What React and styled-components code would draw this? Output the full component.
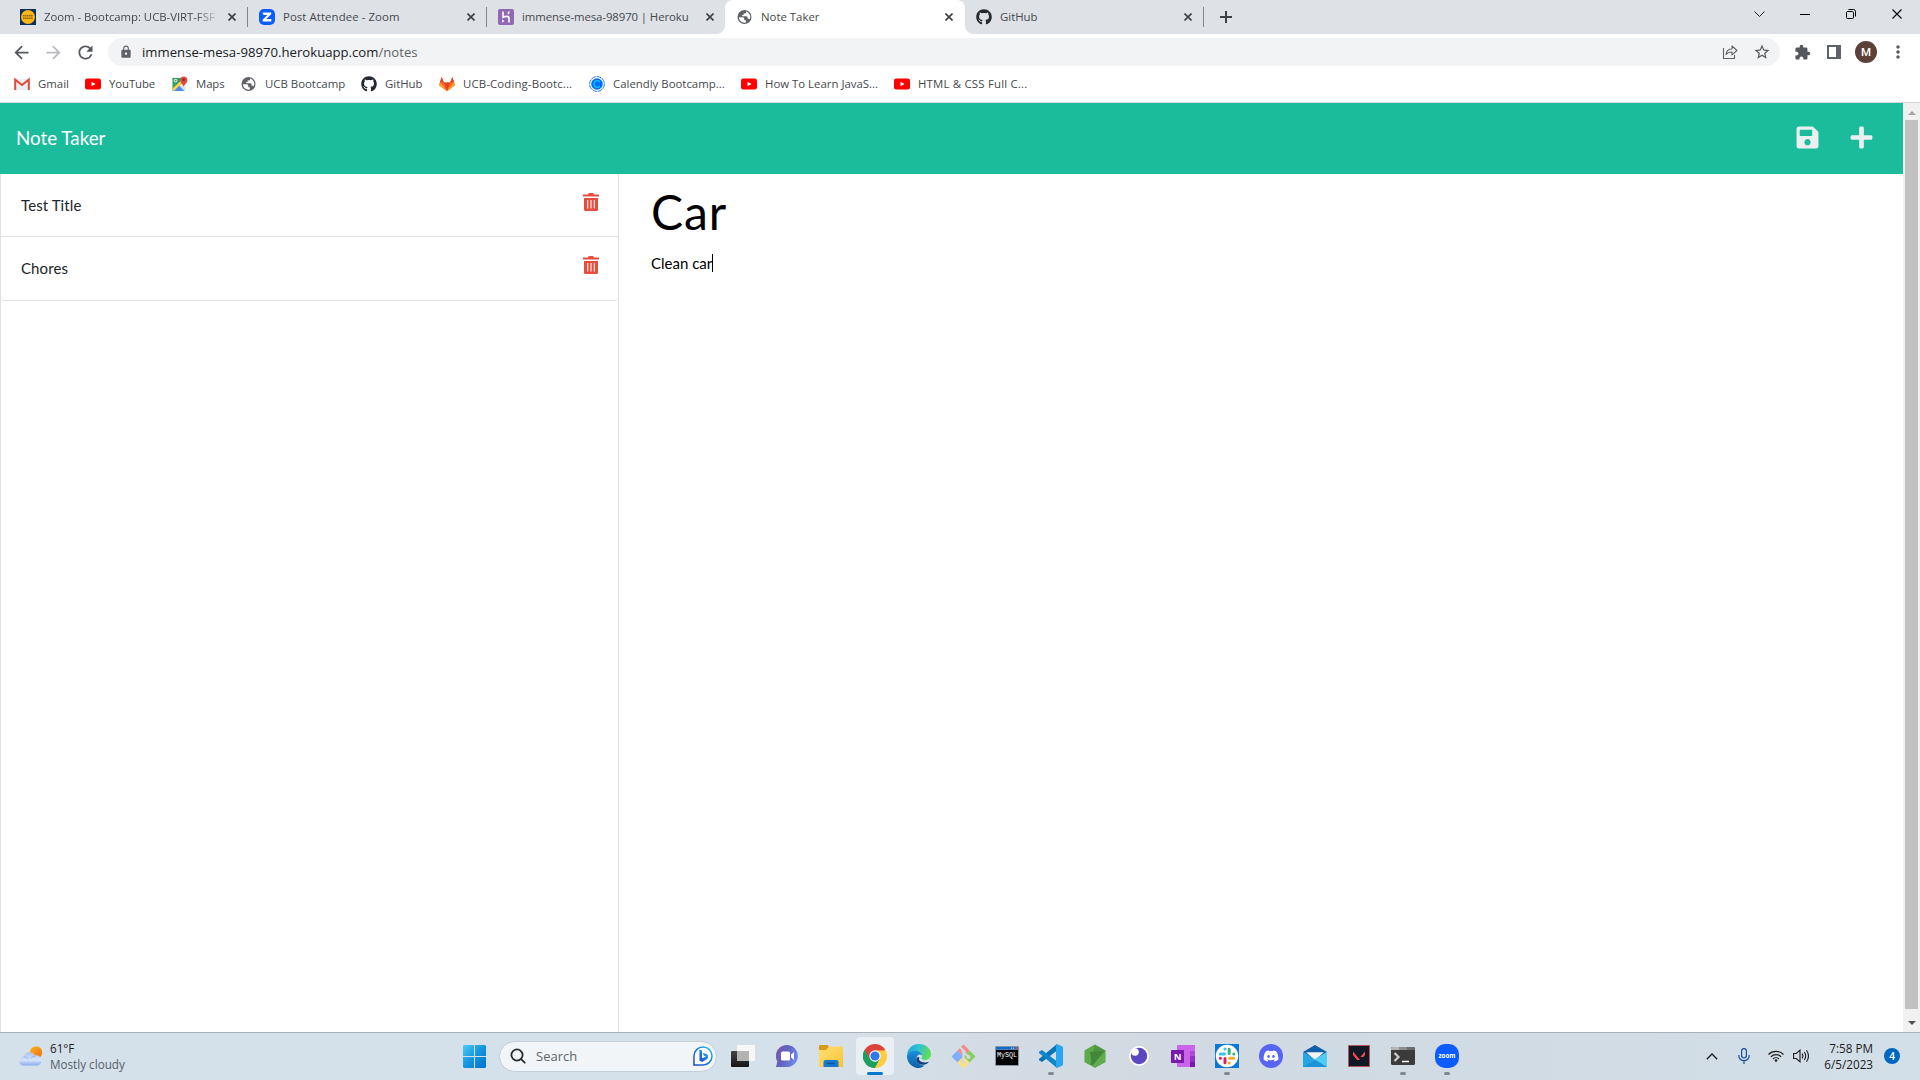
import React from 'react';
import styled, { createGlobalStyle, css } from 'styled-components';
import {
  MdArrowBack, MdArrowForward, MdRefresh, MdLock,
  MdStarBorder, MdExtension, MdMoreVert,
} from 'react-icons/md';
import { FaGithub, FaDiscord, FaSave, FaPlus } from 'react-icons/fa';

const GlobalStyle = createGlobalStyle`
  *, *::before, *::after { box-sizing: border-box; }
  body { margin: 0; overflow: hidden; font-family: "Open Sans", "Noto Sans", sans-serif; }
  svg { display: block; flex: none; }
`;

const Screen = styled.div`
  display: flex;
  flex-direction: column;
  width: 1920px;
  height: 1080px;
  background: #fff;
`;

/* ---------- browser chrome ---------- */

const TabStrip = styled.div`
  display: flex;
  height: 34px;
  padding-left: 8px;
  background: #dee1e6;
`;

const TabBox = styled.div`
  position: relative;
  display: flex;
  align-items: center;
  width: 239px;
  height: 34px;
  padding: 0 7px 0 12px;
  gap: 8px;
  color: #45494d;
  ${(p) => p.$active && css`
    background: #fff;
    border-radius: 8px 8px 0 0;
    width: 240px;
    margin-right: -1px;
    padding-right: 8px;
    &::before, &::after {
      content: "";
      position: absolute;
      bottom: 0;
      width: 8px;
      height: 8px;
    }
    &::before { left: -8px; background: radial-gradient(circle at 0 0, transparent 7.5px, #fff 8px); }
    &::after { right: -8px; background: radial-gradient(circle at 100% 0, transparent 7.5px, #fff 8px); }
  `}
  ${(p) => p.$divider && css`
    &::after {
      content: "";
      position: absolute;
      right: -1px;
      top: 7px;
      width: 1px;
      height: 20px;
      background: #80868b;
    }
  `}
`;

const TabTitle = styled.span`
  flex: 1;
  overflow: hidden;
  margin-right: -4px;
  white-space: nowrap;
  font-size: 11.4px;
  line-height: 18px;
  letter-spacing: ${(p) => p.$track || 0}px;
  ${(p) => p.$fade && 'mask-image: linear-gradient(90deg, #000 86%, transparent 100%);'}
`;

const TabClose = styled.span`
  display: flex;
  width: 16px;
  justify-content: center;
`;

const NewTab = styled.div`
  display: flex;
  align-items: center;
  padding-left: 17px;
  flex: 1;
`;

const WindowControls = styled.div`
  display: flex;
  height: 28px;
`;

const ControlCell = styled.div`
  display: flex;
  align-items: center;
  justify-content: center;
  width: 46px;
`;

const Toolbar = styled.div`
  display: flex;
  align-items: center;
  height: 36px;
  padding-left: 5px;
  color: #5f6368;
`;

const NavButton = styled.div`
  display: flex;
  align-items: center;
  justify-content: center;
  width: ${(p) => p.$w || 32}px;
  height: 28px;
  color: ${(p) => (p.$dim ? '#b9bbbe' : '#54585d')};
`;

const AddressBar = styled.div`
  display: flex;
  align-items: center;
  width: 1672px;
  height: 28px;
  margin-left: 7px;
  padding: 0 2px 0 11px;
  border-radius: 14px;
  background: #f1f3f4;
`;

const Url = styled.span`
  flex: 1;
  margin-left: 9px;
  font-size: 13.17px;
  line-height: 20px;
  color: #5f6368;
  b { font-weight: 400; color: #202124; }
`;

const Avatar = styled.div`
  width: 22px;
  height: 22px;
  border-radius: 50%;
  background: #5d4037;
  color: #fff;
  font: 500 11.5px/22px Roboto, sans-serif;
  text-align: center;
`;

const Bookmarks = styled.div`
  display: flex;
  align-items: center;
  height: 33px;
  padding: 0 0 4px 14px;
  border-bottom: 1px solid #d5d8dc;
`;

const Bookmark = styled.div`
  display: flex;
  align-items: center;
  gap: 8px;
  width: ${(p) => p.$w}px;
  font-size: 11.4px;
  line-height: 18px;
  letter-spacing: ${(p) => p.$track || 0}px;
  white-space: nowrap;
  color: #45494d;
`;

const IconBox = styled.span`
  display: flex;
  align-items: center;
  justify-content: center;
  flex: none;
  width: 16px;
  height: 16px;
`;

/* ---------- note taker page ---------- */

const Viewport = styled.div`
  display: flex;
  height: 929px;
`;

const Page = styled.div`
  display: flex;
  flex-direction: column;
  width: 1903px;
  font-family: Lato, sans-serif;
`;

const Navbar = styled.header`
  display: flex;
  align-items: center;
  justify-content: space-between;
  height: 71px;
  padding: 0 29px 2px 16px;
  background: #1abc9c;
  color: #fff;
  font-size: 18.8px;
`;

const NavActions = styled.div`
  display: flex;
  gap: 29px;
  padding-bottom: 1px;
  color: #eceff1;
`;

const Columns = styled.main`
  display: flex;
  flex: 1;
`;

const NoteList = styled.ul`
  width: 619px;
  margin: 0;
  padding: 0;
  list-style: none;
  border: solid #dfdfdf;
  border-width: 0 1px;
`;

const NoteItem = styled.li`
  display: flex;
  justify-content: space-between;
  height: ${(p) => (p.$last ? 64 : 63)}px;
  padding: 19px 19px 0 20px;
  border-bottom: 1px solid #dfdfdf;
  border-radius: ${(p) => (p.$last ? '0 0 4px 4px' : 0)};
  font-size: 15px;
  line-height: 24px;
  letter-spacing: 0.1px;
  color: #212529;
`;

const Editor = styled.section`
  display: flex;
  flex-direction: column;
  padding: 2px 0 0 32px;
  color: #000;
`;

const NoteTitle = styled.div`
  font-size: 48px;
  line-height: 72px;
  letter-spacing: 0.9px;
`;

const NoteBody = styled.div`
  display: flex;
  align-items: center;
  margin-top: 3px;
  font-size: 15px;
  line-height: 24px;
`;

const Caret = styled.i`
  width: 1px;
  height: 18px;
  background: #000;
`;

const Scrollbar = styled.div`
  display: flex;
  flex-direction: column;
  align-items: center;
  width: 17px;
  background: #f1f1f1;
`;

const ScrollArrow = styled.div`
  display: flex;
  align-items: center;
  height: ${(p) => p.$h}px;
  padding-top: ${(p) => p.$top}px;
`;

const Thumb = styled.div`
  flex: 1;
  width: 13px;
  background: #c1c1c1;
`;

/* ---------- taskbar ---------- */

const Taskbar = styled.footer`
  display: flex;
  align-items: center;
  height: 48px;
  padding-bottom: 1px;
  border-top: 1px solid #a8b1b9;
  background: linear-gradient(90deg, #d5e1ea 0%, #d5e1ea 40%, #d2dae2 57%, #d0dbe4 75%, #d3dfe8 100%);
`;

const Weather = styled.div`
  display: flex;
  align-items: center;
  gap: 7px;
  width: 452px;
  padding: 0 0 1px 19px;
  font-size: 11.7px;
  line-height: 16px;
  color: #55606a;
  b { display: block; font-weight: 400; color: #1b1b1b; }
`;

const TaskCell = styled.div`
  position: relative;
  display: flex;
  align-items: center;
  justify-content: center;
  width: 44px;
  height: 40px;
  &::before {
    content: "";
    position: absolute;
    inset: 1px 3px;
    border-radius: 4px;
    background: ${(p) => (p.$active ? '#e9eff4' : 'transparent')};
  }
  &::after {
    content: "";
    position: absolute;
    bottom: 1px;
    width: ${(p) => (p.$active ? 16 : 6)}px;
    height: 3px;
    border-radius: 2px;
    background: ${(p) => (p.$active ? '#0a74cf' : p.$running ? '#82888e' : 'transparent')};
  }
  svg { position: relative; }
`;

const SearchBox = styled.div`
  display: flex;
  align-items: center;
  width: 218px;
  height: 31px;
  margin: 0 4px 0 3px;
  padding: 0 4px 0 10px;
  border: 1px solid #c3ced7;
  border-radius: 16px;
  background: #f1f5f8;
  color: #606467;
  font-size: 13px;
  line-height: 18px;
  span { flex: 1; margin-left: 10px; }
  svg:last-child { margin-right: -1px; }
`;

const Tray = styled.div`
  display: flex;
  align-items: center;
  margin-left: auto;
  padding-right: 20px;
`;

const TrayCell = styled.div`
  display: flex;
  justify-content: center;
  width: ${(p) => p.$w}px;
`;

const Clock = styled.div`
  width: 63px;
  margin-right: 11px;
  padding-bottom: 1px;
  text-align: right;
  white-space: nowrap;
  font-size: 11.7px;
  line-height: 16px;
  color: #1b1b1b;
`;

const Badge = styled.div`
  width: 16px;
  height: 16px;
  border-radius: 50%;
  background: #0067c0;
  color: #fff;
  font-size: 10px;
  font-weight: 600;
  line-height: 16px;
  text-align: center;
`;

/* ---------- drawings ---------- */

const Cross = ({ s = 8, w = 1.6, c = '#3c4043' }) => (
  <svg width={s} height={s} viewBox={`0 0 ${s} ${s}`}>
    <path d={`M.5 .5L${s - 0.5} ${s - 0.5}M${s - 0.5} .5L.5 ${s - 0.5}`} stroke={c} strokeWidth={w} />
  </svg>
);

const Globe = () => (
  <svg width="16" height="16" viewBox="0 0 16 16">
    <circle cx="7.500" cy="8" r="7" fill="#5f6368" />
    <path d="M2 8.300h3.700q1.600.2 1.600 1.700v1.200h1.600v2.300Q5 14.200 3 11.500 2 10 2 8.300zM9 2.300v1.200q0 1-1.200 1H6.600v1.600H5.200v1.200h4.400q1 .2 1 1.300v1.200h1.300q.6.100.8.600 1.200-2 .4-4.200-1.200-3-4.100-3.900z" fill="#fff" />
  </svg>
);

const UcbIcon = () => (
  <svg width="16" height="16" viewBox="0 0 16 16">
    <path fill="#0b2f5b" d="M0 0h16v16H0z" />
    <circle cx="8" cy="8" r="7" fill="#fdb515" />
    <path d="M3 6.700h10M3 9.300h10" stroke="#8a6a20" strokeWidth="1.500" strokeDasharray="1.6 .4" />
  </svg>
);

const ZoomTabIcon = () => (
  <svg width="16" height="16" viewBox="0 0 16 16">
    <rect width="16" height="16" rx="5" fill="#0b5cff" />
    <path d="M3.600 3.500h8.600v1.800L7.300 10h5v2.500H3.700v-2L8.500 6H5.600A2 2 0 0 1 3.600 4z" fill="#fff" />
  </svg>
);

const HerokuIcon = () => (
  <svg width="16" height="16" viewBox="0 0 16 16">
    <rect width="16" height="16" rx="2" fill="#9068b4" />
    <path d="M5 2.500v5.800c2-1 6-1.700 6 .7v4.500M11 2.500c0 1.200-.5 2-1 2.600" fill="none" stroke="#fff" strokeWidth="1.600" />
    <path d="M4.200 10.300l2.200 1.700-2.200 1.800z" fill="#fff" />
  </svg>
);

const GmailIcon = () => (
  <svg width="16" height="16" viewBox="0 0 16 16">
    <path d="M1 3h14v11H1z" fill="#eceff1" />
    <path d="M1.200 14V3.600L8 9l6.800-5.400V14" fill="none" stroke="#dd4b3e" strokeWidth="2" />
  </svg>
);

const YoutubeIcon = () => (
  <svg width="16" height="16" viewBox="0 0 16 16">
    <rect y="2.500" width="16" height="11" rx="2.200" fill="#f00" />
    <path d="M6.500 5.700v4.600l4-2.300z" fill="#fff" />
  </svg>
);

const MapsIcon = () => (
  <svg width="16" height="16" viewBox="0 0 16 16">
    <rect x=".5" y="1.500" width="13" height="13.500" rx="1" fill="#dfe3e6" />
    <path d="M.5 2h9v5L.5 15z" fill="#34a162" />
    <path d="M.5 12.500L9 4.500l1.500 2.700L2 15.200z" fill="#fcd04b" />
    <path d="M2 15L7.300 9.700l5 5.300z" fill="#4a8af4" />
    <path d="M11.500 11c0-2.500-3.300-3.700-3.300-7A3.500 3.500 0 0 1 15.400 4c0 3.300-3.300 4.500-3.900 7z" fill="#dd4b3e" />
    <circle cx="11.700" cy="3.800" r="1.200" fill="#822b22" />
    <circle cx="3.600" cy="4.600" r="1.300" fill="none" stroke="#fff" />
  </svg>
);

const GitlabIcon = () => (
  <svg width="16" height="16" viewBox="0 0 16 16">
    <path d="M8 15.300L0 9.300 2.600 1l2.300 5.400h6.200L13.400 1 16 9.300z" fill="#fc6d26" />
    <path d="M8 15.300L4.900 6.400h6.200z" fill="#e24329" />
    <path d="M8 15.300L0 9.300l1.100-3zM8 15.300l8-6-1.100-3z" fill="#fca326" />
    <path d="M1 6.400L2.600 1l2.300 5.400zM15 6.400L13.400 1l-2.300 5.400z" fill="#e24329" />
  </svg>
);

const CalendlyIcon = () => (
  <svg width="16" height="16" viewBox="0 0 16 16">
    <circle cx="8" cy="8" r="7.400" fill="#fff" stroke="#2b7de9" strokeWidth="1" strokeDasharray="5 .7" />
    <circle cx="8" cy="8" r="5.800" fill="#006bff" />
    <path d="M10.800 6A3.300 3.300 0 1 0 10.800 10" fill="none" stroke="#0ac8f0" strokeWidth="1.300" />
  </svg>
);

const ShareIcon = () => (
  <svg width="16" height="16" viewBox="0 0 16 16" fill="none" stroke="#5f6368" strokeWidth="1.100">
    <path d="M1.500 4v10.500h11V11" />
    <path d="M4 10.500c.5-4 3-5.500 6-5.500V2l5 4.500-5 4.300V8c-2.500 0-4.500.5-6 2.500z" strokeLinejoin="round" />
  </svg>
);

const TrashIcon = () => (
  <svg width="16" height="18" viewBox="0 0 16 18">
    <path d="M0 1.500h5L5.800 0h4.400l.8 1.500h5v2H0zM1 5h14v11.500q0 1.500-1.500 1.500h-11Q1 18 1 16.500z" fill="#e74c3c" />
    <path d="M4.700 7v8.500M8 7v8.500M11.300 7v8.500" stroke="#fff" strokeWidth="1.100" />
  </svg>
);

const WeatherIcon = () => (
  <svg width="24" height="20" viewBox="0 0 24 20">
    <defs>
      <linearGradient id="sun" x1="0" y1="0" x2="1" y2="1"><stop stopColor="#f9b61c" /><stop offset="1" stopColor="#f56b10" /></linearGradient>
      <linearGradient id="cloud" x1="0" y1="0" x2="0" y2="1"><stop stopColor="#a9c2ef" /><stop offset=".6" stopColor="#d6e3fb" /><stop offset="1" stopColor="#86a8ea" /></linearGradient>
    </defs>
    <circle cx="17" cy="6.500" r="6.200" fill="url(#sun)" />
    <path d="M4.500 19.500a4.500 4.500 0 0 1 0-9A6.300 6.300 0 0 1 16 9.500a5 5 0 1 1 3 10z" fill="url(#cloud)" />
    <path d="M4.500 11q3-.5 5 2M16 10q-3 .3-4 2.500" fill="none" stroke="#8caae4" strokeWidth=".8" />
  </svg>
);

const StartIcon = () => (
  <svg width="23" height="23" viewBox="0 0 23 23">
    <defs><linearGradient id="win" x1="0" y1="0" x2="1" y2="1"><stop stopColor="#4ccaf8" /><stop offset=".5" stopColor="#1595e0" /><stop offset="1" stopColor="#0070cf" /></linearGradient></defs>
    <path d="M1 0h10v11H0V1zM12 0h10l1 1v10H12zM0 12h11v11H1l-1-1zM12 12h11v10l-1 1H12z" fill="url(#win)" />
  </svg>
);

const SearchGlyph = () => (
  <svg width="16" height="16" viewBox="0 0 16 16" fill="none" stroke="#2b2b2b" strokeWidth="1.800" strokeLinecap="round">
    <circle cx="7" cy="7" r="5.600" /><path d="M11.200 11.200L14.700 14.700" />
  </svg>
);

const BingIcon = () => (
  <svg width="20" height="20" viewBox="0 0 20 20">
    <defs><linearGradient id="bing" x1="0" y1="1" x2="1" y2="0"><stop stopColor="#1f49c5" /><stop offset=".6" stopColor="#1d86e4" /><stop offset="1" stopColor="#37c4f2" /></linearGradient></defs>
    <path d="M1 19V10a9 9 0 1 1 9 9z" fill="#fff" stroke="url(#bing)" strokeWidth="1.500" />
    <path d="M6.500 3.500l2.500 1v7.800l4-1.900-2.200-1-1.100-2.600L14 8.300q1.500 1.200 1 3.200-.3 1-1.200 1.700L9 16l-2.500-1.600z" fill="url(#bing)" />
  </svg>
);

const TaskViewIcon = () => (
  <svg width="24" height="22" viewBox="0 0 24 22">
    <defs><linearGradient id="tv" x1="0" y1="0" x2="0" y2="1"><stop stopColor="#444" /><stop offset="1" stopColor="#151515" /></linearGradient></defs>
    <rect y="6" width="18" height="16" rx="1" fill="url(#tv)" />
    <rect x="6" width="18" height="16" rx="1" fill="#f7f7f7" />
    <path d="M6 6h12v10H6z" fill="#b3b3b3" />
  </svg>
);

const ChatIcon = () => (
  <svg width="23" height="22" viewBox="0 0 23 22">
    <defs><linearGradient id="chat" x1="0" y1="0" x2="1" y2=".4"><stop stopColor="#7f5aa5" /><stop offset=".5" stopColor="#6161c0" /><stop offset="1" stopColor="#7186e4" /></linearGradient></defs>
    <path d="M0 22l1.300-5.500A11 11 0 1 1 11.500 22z" fill="url(#chat)" />
    <rect x="5" y="6.500" width="9" height="9" rx="1.500" fill="#fff" />
    <path d="M15 9.800L18 7v8l-3-2.800z" fill="#fff" />
  </svg>
);

const ExplorerIcon = () => (
  <svg width="24" height="22" viewBox="0 0 24 22">
    <defs><linearGradient id="fold" x1="0" y1="0" x2="1" y2="1"><stop stopColor="#ffe07a" /><stop offset="1" stopColor="#fbc32d" /></linearGradient></defs>
    <path d="M0 1q0-1 1-1h7.500l2 2.500L8 5H0z" fill="#d79a13" />
    <path d="M0 5h7l3-3.500h13q1 0 1 1V21q0 1-1 1H1q-1 0-1-1z" fill="url(#fold)" />
    <path d="M4.500 22v-5q0-2 2-2h11q2 0 2 2v5z" fill="#1678cf" /><path d="M8 18.500h8" stroke="#0d5297" strokeWidth="1.300" />
  </svg>
);

const ChromeIcon = () => (
  <svg width="24" height="24" viewBox="0 0 24 24">
    <path d="M12 12L1.600 6A12 12 0 0 1 22.400 6z" fill="#dd4437" />
    <path d="M12 12L1.600 6A12 12 0 0 0 12 24z" fill="#1da05e" />
    <path d="M12 12l10.400-6A12 12 0 0 1 12 24z" fill="#fecd42" />
    <path d="M12 6.500h10.700L17 15z" fill="#fecd42" /><path d="M1.600 6l5.600 9L12 6.500z" fill="#dd4437" /><path d="M2 6.500l5 9 5 2.500 5-3-5 9A12 12 0 0 1 1.600 6z" fill="#1da05e" />
    <path d="M12 24l5-9 2-4h4.800A12 12 0 0 1 12 24z" fill="#fecd42" />
    <circle cx="12" cy="12" r="5.700" fill="#fff" /><circle cx="12" cy="12" r="4.600" fill="#2b7bed" />
  </svg>
);

const EdgeIcon = () => (
  <svg width="24" height="24" viewBox="0 0 24 24">
    <defs>
      <linearGradient id="e1" x1="0" y1="0" x2="1" y2=".3"><stop stopColor="#1b9ee0" /><stop offset=".5" stopColor="#2fc2d8" /><stop offset="1" stopColor="#5fdc5a" /></linearGradient>
      <linearGradient id="e2" x1="0" y1="0" x2="0" y2="1"><stop stopColor="#1a8fd8" /><stop offset="1" stopColor="#0f5ea9" /></linearGradient>
    </defs>
    <path d="M0 11C.5 4.500 5.500 0 12 0c7 0 12 4.700 12 10 0 3.800-2.700 6-6 6-2.500 0-3.900-1-3.700-1.900.2-.6.900-1 .9-2.600C15.200 8.700 12.500 7 9 7c-4 0-7.500 1.700-9 4z" fill="url(#e1)" />
    <path d="M0 11.500C1 8.500 4.500 6.700 8.500 6.700c3.500 0 6.500 2 6.700 4.800-3-2.500-6.200.5-5.700 4 .6 4 4.500 6.300 8 6-1.600 1.600-3.500 2.500-5.500 2.500C5.500 24-.5 18.500 0 11.500z" fill="url(#e2)" />
    <path d="M9.600 13.500c-1 4.500 2.500 7.600 7.400 7.300 2-.2 4-1.800 5-3-2 1-5.600 1.200-8.300-.3-1.500-.9-2.200-2.500-1.300-4.500z" fill="#123f79" />
  </svg>
);

const GitIcon = () => (
  <svg width="25" height="25" viewBox="0 0 25 25">
    <path d="M12.500.500l6 6-6 6-6-6z" fill="#f78686" /><path d="M18.500 6.500l6 6-6 6-6-6z" fill="#86d05f" />
    <path d="M6.500 6.500l6 6-6 6-6-6z" fill="#82aef9" /><path d="M12.500 12.500l6 6-6 6-6-6z" fill="#fde07a" />
    <path d="M9 3l3.500 4v11M12.500 8l5 5" stroke="#d3dae2" strokeWidth="2.200" fill="none" />
    <circle cx="12.500" cy="7.500" r="2" fill="#d3dae2" /><circle cx="12.500" cy="18" r="2" fill="#d3dae2" /><circle cx="17.500" cy="13" r="2" fill="#d3dae2" />
  </svg>
);

const MysqlIcon = () => (
  <svg width="24" height="20" viewBox="0 0 24 20">
    <rect width="24" height="20" rx="1" fill="#8597a8" /><path d="M1 1h22v2.500H1z" fill="#1269c7" /><path d="M1 4h22v15H1z" fill="#000" />
    <path d="M16 2.200h4" stroke="#fff" strokeWidth="1" strokeDasharray="1 1" /><path d="M20.500 1.200h2v2h-2z" fill="#e5533f" />
    <text x="12" y="11" fontSize="6.500" fontFamily="Liberation Mono, monospace" textAnchor="middle" textLength="20" lengthAdjust="spacingAndGlyphs" fill="#fff">MySQL</text>
  </svg>
);

const VscodeIcon = () => (
  <svg width="24" height="24" viewBox="0 0 24 24">
    <path d="M18 0v6.500L3 18 0 16.200V15z" fill="#0a74b8" />
    <path d="M18 24v-6.500L3 6 0 7.800V9z" fill="#0f84cb" />
    <path d="M18 0l6 2.800v18.400L18 24l-1-1V1z" fill="#2aa6f0" />
  </svg>
);

const NodeIcon = () => (
  <svg width="22" height="24" viewBox="0 0 22 24">
    <path d="M11 .5l10.300 6v11.500L11 23.800.7 18V6.500z" fill="#4d9740" />
    <path d="M11 .5L.7 6.500V18L6 21z" fill="#5fa94d" />
    <path d="M6 8l15.300-1.500L8 22z" fill="#418838" />
    <path d="M21.300 6.500V18L11 23.800 8 22z" fill="#62ab4f" />
  </svg>
);

const InsomniaIcon = () => (
  <svg width="20" height="20" viewBox="0 0 20 20">
    <circle cx="10" cy="10" r="10" fill="#fff" /><circle cx="10" cy="10" r="8.200" fill="#5a48c2" /><circle cx="6" cy="6" r="3.800" fill="#fff" />
  </svg>
);

const OneNoteIcon = () => (
  <svg width="24" height="22" viewBox="0 0 24 22">
    <path d="M6 0h18v22H6z" fill="#ca64ea" /><path d="M19 6h5v5h-5z" fill="#ae4bd5" /><path d="M19 11h5v5.500h-5z" fill="#9332bf" /><path d="M19 16.500h5V22h-5z" fill="#7719aa" />
    <rect y="5" width="13" height="13" rx="1" fill="#7719aa" />
    <text x="6.500" y="14.800" fontSize="9.500" fontWeight="700" fontFamily="Open Sans, sans-serif" textAnchor="middle" fill="#fff">N</text>
  </svg>
);

const SlackIcon = () => (
  <svg width="24" height="24" viewBox="0 0 24 24">
    <path d="M0 0h24v24H0z" fill="#0a78d4" /><circle cx="12" cy="12" r="11.200" fill="#fff" />
    <g fill="none" strokeWidth="3" strokeLinecap="round">
      <path d="M5.300 10h4.200M10 5h.1" stroke="#36c5f0" /><path d="M14.200 5.200v4.300M18.800 10h.1" stroke="#2eb67d" />
      <path d="M14.500 14.200h4.200M14.200 18.900h.1" stroke="#ecb22e" /><path d="M10 14.500v4.200M5.300 14.200h.1" stroke="#e01e5a" />
    </g>
  </svg>
);

const DiscordBadge = styled.span`
  position: relative;
  display: flex;
  align-items: center;
  justify-content: center;
  width: 24px;
  height: 24px;
  border-radius: 50%;
  background: #5865f2;
  color: #fff;
`;

const MailIcon = () => (
  <svg width="24" height="22" viewBox="0 0 24 22">
    <path d="M0 7l12-7 12 7-12 8z" fill="#0f5ea9" /><path d="M3 7.200h18L12 15z" fill="#f3f3f3" />
    <path d="M0 7l12.500 8L24 22H0z" fill="#25a5e5" /><path d="M24 7v15L11 14.500z" fill="#4fcdf5" /><path d="M0 22l12.500-7L24 22z" fill="#1d93da" />
  </svg>
);

const ValorantIcon = () => (
  <svg width="22" height="22" viewBox="0 0 22 22">
    <path d="M.5.500h21v21H.5z" fill="#101823" stroke="#b5545b" />
    <path d="M5 6.500l7 8.500H9L5 10zM17 6.500v3.600l-1.600 2h-3z" fill="#ff4655" />
  </svg>
);

const TerminalIcon = () => (
  <svg width="24" height="18" viewBox="0 0 24 18">
    <rect width="24" height="18" rx="1.500" fill="#3b3b3b" /><path d="M0 3V1.500Q0 0 1.500 0H8v3z" fill="#b5b5b5" /><path d="M8 0h8v3H8z" fill="#8d8d8d" /><path d="M16 0h6.500Q24 0 24 1.500V3h-8z" fill="#6c6c6c" />
    <path d="M3.500 6l4 4-4 4" fill="none" stroke="#ccc" strokeWidth="2.200" /><path d="M11 14.500h7" stroke="#fff" strokeWidth="1.500" />
  </svg>
);

const ZoomIcon = () => (
  <svg width="24" height="24" viewBox="0 0 24 24">
    <rect width="24" height="24" rx="10" fill="#0b5cff" />
    <text x="12" y="14.300" fontSize="7" fontWeight="700" fontFamily="Open Sans, sans-serif" textAnchor="middle" textLength="17" lengthAdjust="spacingAndGlyphs" fill="#fff">zoom</text>
  </svg>
);

const MicIcon = () => (
  <svg width="12" height="16" viewBox="0 0 12 16" fill="none" stroke="#1a4f9c" strokeWidth="1.200">
    <rect x="3.600" y=".6" width="4.800" height="9.400" rx="2.400" /><path d="M.8 7v1a5.200 4.600 0 0 0 10.400 0V7M6 12.600V16" />
  </svg>
);

const WifiIcon = () => (
  <svg width="16" height="12" viewBox="0 0 16 12" fill="none" stroke="#1b1b1b" strokeWidth="1.100">
    <path d="M.5 4.500a10.500 10.500 0 0 1 15 0M2.800 6.800a7.300 7.300 0 0 1 10.400 0M5 9a4.300 4.300 0 0 1 6 0" /><circle cx="8" cy="10.500" r="1.300" fill="#1b1b1b" stroke="none" />
  </svg>
);

const VolumeIcon = () => (
  <svg width="17" height="14" viewBox="0 0 17 14" fill="none" stroke="#1b1b1b" strokeWidth="1.100">
    <path d="M.6 4.500h2.600L7 1.200v11.600L3.200 9.500H.6zM9 4.600q1.700 2.400 0 4.800M11.300 3q2.800 4 0 8M13.500 1.200q4 5.800 0 11.600" />
  </svg>
);

const tabs = [
  { icon: <UcbIcon />, title: 'Zoom - Bootcamp: UCB-VIRT-FSF', fade: true, divider: true, track: -0.05 },
  { icon: <ZoomTabIcon />, title: 'Post Attendee - Zoom', divider: true, track: 0.08 },
  { icon: <HerokuIcon />, title: 'immense-mesa-98970 | Heroku', track: -0.1 },
  { icon: <Globe />, title: 'Note Taker', active: true },
  { icon: <FaGithub size={16} color="#24292f" />, title: 'GitHub', divider: true },
];

const bookmarks = [
  { icon: <GmailIcon />, label: 'Gmail', w: 71 },
  { icon: <YoutubeIcon />, label: 'YouTube', w: 87, track: -0.1 },
  { icon: <MapsIcon />, label: 'Maps', w: 69, track: -0.1 },
  { icon: <Globe />, label: 'UCB Bootcamp', w: 120 },
  { icon: <FaGithub size={16} color="#24292f" />, label: 'GitHub', w: 78 },
  { icon: <GitlabIcon />, label: 'UCB-Coding-Bootc...', w: 150, track: 0.13 },
  { icon: <CalendlyIcon />, label: 'Calendly Bootcamp...', w: 152 },
  { icon: <YoutubeIcon />, label: 'How To Learn JavaS...', w: 153 },
  { icon: <YoutubeIcon />, label: 'HTML & CSS Full C...', w: 140, track: 0.2 },
];

const notes = ['Test Title', 'Chores'];

const apps = [
  { icon: <TaskViewIcon /> }, { icon: <ChatIcon /> }, { icon: <ExplorerIcon /> },
  { icon: <ChromeIcon />, active: true }, { icon: <EdgeIcon /> }, { icon: <GitIcon /> },
  { icon: <MysqlIcon /> }, { icon: <VscodeIcon />, running: true }, { icon: <NodeIcon /> },
  { icon: <InsomniaIcon /> }, { icon: <OneNoteIcon /> }, { icon: <SlackIcon />, running: true },
  { icon: <DiscordBadge><FaDiscord size={16} /></DiscordBadge> }, { icon: <MailIcon /> },
  { icon: <ValorantIcon /> }, { icon: <TerminalIcon />, running: true }, { icon: <ZoomIcon />, running: true },
];

export default function App() {
  return (
    <Screen>
      <GlobalStyle />
      <TabStrip>
        {tabs.map((t) => (
          <TabBox key={t.title} $active={t.active} $divider={t.divider}>
            <IconBox>{t.icon}</IconBox>
            <TabTitle $fade={t.fade} $track={t.track}>{t.title}</TabTitle>
            <TabClose><Cross /></TabClose>
          </TabBox>
        ))}
        <NewTab>
          <svg width="12" height="12" viewBox="0 0 12 12"><path d="M6 0v12M0 6h12" stroke="#3c4043" strokeWidth="2" /></svg>
        </NewTab>
        <WindowControls>
          <ControlCell><svg width="11" height="7" viewBox="0 0 11 7"><path d="M.5.500l5 5 5-5" fill="none" stroke="#222" /></svg></ControlCell>
          <ControlCell><svg width="10" height="1"><path d="M0 .5h10" stroke="#000" /></svg></ControlCell>
          <ControlCell>
            <svg width="10" height="10" viewBox="0 0 10 10" fill="none" stroke="#000">
              <rect x=".5" y="2.500" width="7" height="7" rx="1.200" /><path d="M2.500.500h5q2 0 2 2v5" />
            </svg>
          </ControlCell>
          <ControlCell><Cross s={10} w={1.1} c="#000" /></ControlCell>
        </WindowControls>
      </TabStrip>

      <Toolbar>
        <NavButton><MdArrowBack size={21} /></NavButton>
        <NavButton $dim><MdArrowForward size={21} /></NavButton>
        <NavButton><MdRefresh size={21} /></NavButton>
        <AddressBar>
          <MdLock size={14} />
          <Url><b>immense-mesa-98970.herokuapp.com</b>/notes</Url>
          <NavButton><ShareIcon /></NavButton>
          <NavButton><MdStarBorder size={18} /></NavButton>
        </AddressBar>
        <NavButton $w={44}><MdExtension size={17} /></NavButton>
        <NavButton $w={20}>
          <svg width="14" height="14" viewBox="0 0 14 14"><path d="M1 1h12v12H1z" fill="none" stroke="#5f6368" strokeWidth="2" /><path d="M9 0h5v14H9z" fill="#5f6368" /></svg>
        </NavButton>
        <NavButton $w={44}><Avatar>M</Avatar></NavButton>
        <NavButton $w={20}><MdMoreVert size={20} /></NavButton>
      </Toolbar>

      <Bookmarks>
        {bookmarks.map((b) => (
          <Bookmark key={b.label} $w={b.w} $track={b.track}>
            <IconBox>{b.icon}</IconBox>
            {b.label}
          </Bookmark>
        ))}
      </Bookmarks>

      <Viewport>
        <Page>
          <Navbar>
            <span>Note Taker</span>
            <NavActions><FaSave size={25} /><FaPlus size={25} /></NavActions>
          </Navbar>
          <Columns>
            <NoteList>
              {notes.map((n, i) => (
                <NoteItem key={n} $last={i === notes.length - 1}>
                  <span>{n}</span>
                  <TrashIcon />
                </NoteItem>
              ))}
            </NoteList>
            <Editor>
              <NoteTitle>Car</NoteTitle>
              <NoteBody>Clean car<Caret /></NoteBody>
            </Editor>
          </Columns>
        </Page>
        <Scrollbar>
          <ScrollArrow $h={17} $top={2}><svg width="8" height="4" viewBox="0 0 8 4"><path d="M4 0l4 4H0z" fill="#a3a3a3" /></svg></ScrollArrow>
          <Thumb />
          <ScrollArrow $h={23} $top={4}><svg width="8" height="4" viewBox="0 0 8 4"><path d="M4 4L0 0h8z" fill="#505050" /></svg></ScrollArrow>
        </Scrollbar>
      </Viewport>

      <Taskbar>
        <Weather><WeatherIcon /><span><b>61°F</b>Mostly cloudy</span></Weather>
        <TaskCell><StartIcon /></TaskCell>
        <SearchBox><SearchGlyph /><span>Search</span><BingIcon /></SearchBox>
        {apps.map((a, i) => (
          <TaskCell key={i} $active={a.active} $running={a.running}>{a.icon}</TaskCell>
        ))}
        <Tray>
          <TrayCell $w={32}>
            <svg width="12" height="7" viewBox="0 0 12 7"><path d="M.8 6.200L6 1l5.200 5.200" fill="none" stroke="#1b1b1b" strokeWidth="1.300" /></svg>
          </TrayCell>
          <TrayCell $w={32}><MicIcon /></TrayCell>
          <TrayCell $w={32}><WifiIcon /></TrayCell>
          <TrayCell $w={18}><VolumeIcon /></TrayCell>
          <Clock>7:58 PM<br />6/5/2023</Clock>
          <Badge>4</Badge>
        </Tray>
      </Taskbar>
    </Screen>
  );
}
